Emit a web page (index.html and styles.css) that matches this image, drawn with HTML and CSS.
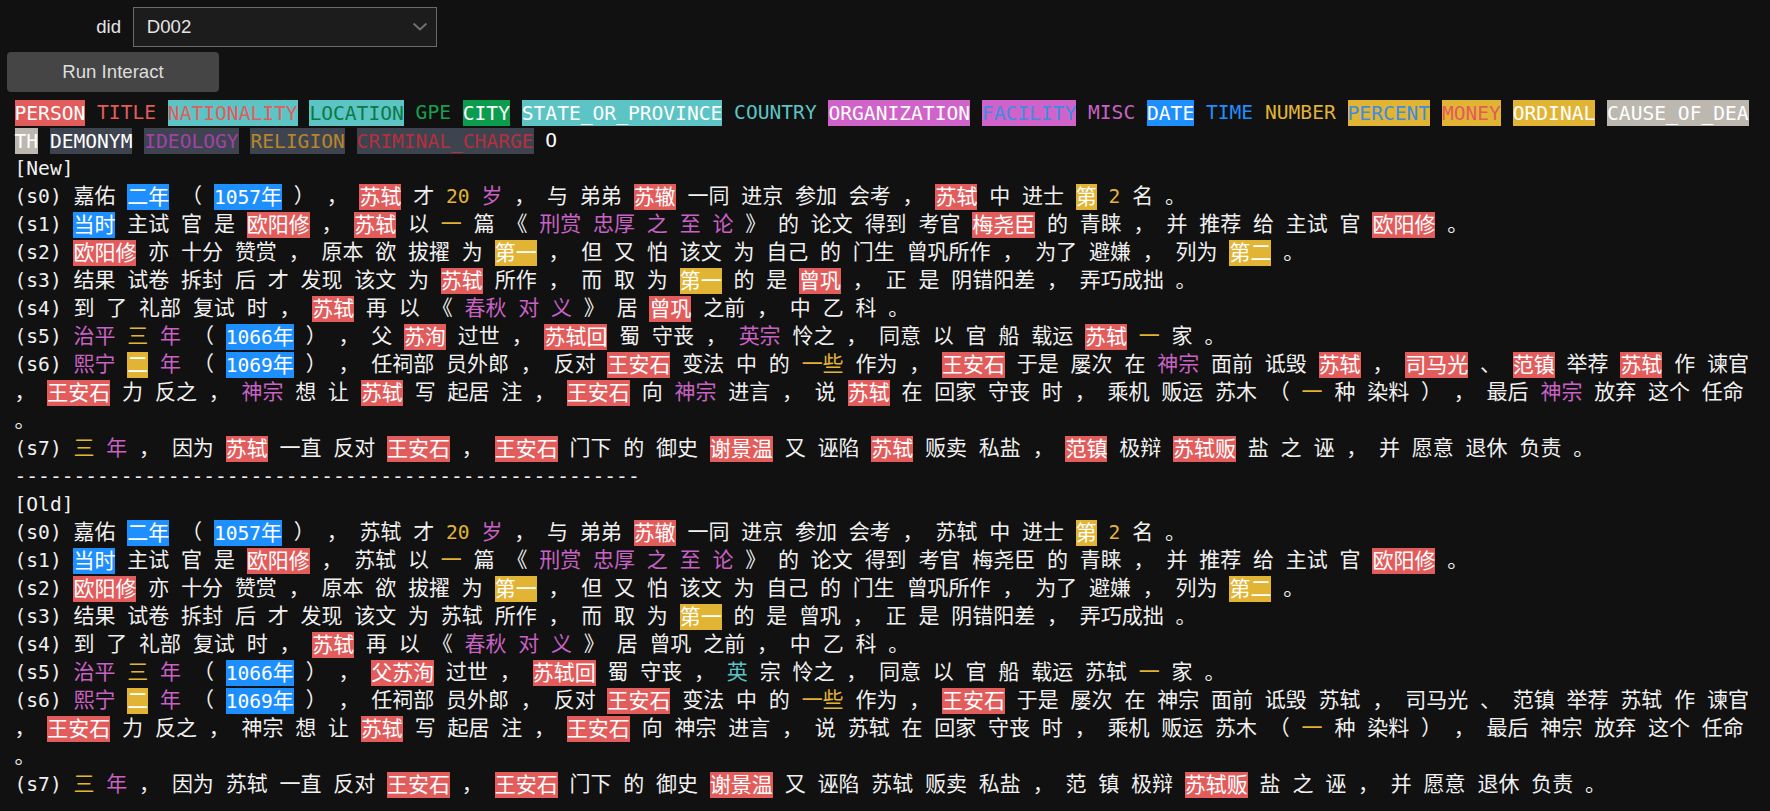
FILE: index.html
```html
<!DOCTYPE html>
<html lang="zh">
<head>
<meta charset="utf-8">
<title>Run Interact</title>
<link rel="stylesheet" href="styles.css">
</head>
<body>
<div class="widgets">
  <div class="row">
    <label class="lbl">did</label>
    <div class="select" role="combobox"><span>D002</span><svg class="chev" viewBox="0 0 16 9"><polyline points="1.5,1.5 8,7.5 14.5,1.5" fill="none" stroke="#707070" stroke-width="2"/></svg></div>
  </div>
  <button class="btn">Run Interact</button>
</div>
<pre class="out"><span class="PER">PERSON</span> <span class="TIT">TITLE</span> <span class="NAT">NATIONALITY</span> <span class="LOC">LOCATION</span> <span class="GPE">GPE</span> <span class="CIT">CITY</span> <span class="STA">STATE_OR_PROVINCE</span> <span class="COU">COUNTRY</span> <span class="ORG">ORGANIZATION</span> <span class="FAC">FACILITY</span> <span class="MIS">MISC</span> <span class="DAT">DATE</span> <span class="TIM">TIME</span> <span class="NUM">NUMBER</span> <span class="PCT">PERCENT</span> <span class="MON">MONEY</span> <span class="ORD">ORDINAL</span> <span class="CAU">CAUSE_OF_DEATH</span> <span class="DEM">DEMONYM</span> <span class="IDE">IDEOLOGY</span> <span class="REL">RELIGION</span> <span class="CRI">CRIMINAL_CHARGE</span> <span class="O">O</span>
[New]
(s0) 嘉佑 <span class="DAT">二年</span> （ <span class="DAT">1057年</span> ） ， <span class="PER">苏轼</span> 才 <span class="NUM">20</span> <span class="MIS">岁</span> ， 与 弟弟 <span class="PER">苏辙</span> 一同 进京 参加 会考 ， <span class="PER">苏轼</span> 中 进士 <span class="ORD">第</span> <span class="NUM">2</span> 名 。
(s1) <span class="DAT">当时</span> 主试 官 是 <span class="PER">欧阳修</span> ， <span class="PER">苏轼</span> 以 <span class="NUM">一</span> 篇 《 <span class="MIS">刑赏 忠厚 之 至 论</span> 》 的 论文 得到 考官 <span class="PER">梅尧臣</span> 的 青睐 ， 并 推荐 给 主试 官 <span class="PER">欧阳修</span> 。
(s2) <span class="PER">欧阳修</span> 亦 十分 赞赏 ， 原本 欲 拔擢 为 <span class="ORD">第一</span> ， 但 又 怕 该文 为 自己 的 门生 曾巩所作 ， 为了 避嫌 ， 列为 <span class="ORD">第二</span> 。
(s3) 结果 试卷 拆封 后 才 发现 该文 为 <span class="PER">苏轼</span> 所作 ， 而 取 为 <span class="ORD">第一</span> 的 是 <span class="PER">曾巩</span> ， 正 是 阴错阳差 ， 弄巧成拙 。
(s4) 到 了 礼部 复试 时 ， <span class="PER">苏轼</span> 再 以 《 <span class="MIS">春秋 对 义</span> 》 居 <span class="PER">曾巩</span> 之前 ， 中 乙 科 。
(s5) <span class="MIS">治平</span> <span class="NUM">三</span> <span class="MIS">年</span> （ <span class="DAT">1066年</span> ） ， 父 <span class="PER">苏洵</span> 过世 ， <span class="PER">苏轼回</span> 蜀 守丧 ， <span class="MIS">英宗</span> 怜之 ， 同意 以 官 船 载运 <span class="PER">苏轼</span> <span class="NUM">一</span> 家 。
(s6) <span class="MIS">熙宁</span> <span class="ORD">二</span> <span class="MIS">年</span> （ <span class="DAT">1069年</span> ） ， 任祠部 员外郎 ， 反对 <span class="PER">王安石</span> 变法 中 的 <span class="NUM">一些</span> 作为 ， <span class="PER">王安石</span> 于是 屡次 在 <span class="MIS">神宗</span> 面前 诋毁 <span class="PER">苏轼</span> ， <span class="PER">司马光</span> 、 <span class="PER">范镇</span> 举荐 <span class="PER">苏轼</span> 作 谏官 ， <span class="PER">王安石</span> 力 反之 ， <span class="MIS">神宗</span> 想 让 <span class="PER">苏轼</span> 写 起居 注 ， <span class="PER">王安石</span> 向 <span class="MIS">神宗</span> 进言 ， 说 <span class="PER">苏轼</span> 在 回家 守丧 时 ， 乘机 贩运 苏木 （ <span class="NUM">一</span> 种 染料 ） ， 最后 <span class="MIS">神宗</span> 放弃 这个 任命 。
(s7) <span class="NUM">三</span> <span class="MIS">年</span> ， 因为 <span class="PER">苏轼</span> 一直 反对 <span class="PER">王安石</span> ， <span class="PER">王安石</span> 门下 的 御史 <span class="PER">谢景温</span> 又 诬陷 <span class="PER">苏轼</span> 贩卖 私盐 ， <span class="PER">范镇</span> 极辩 <span class="PER">苏轼贩</span> 盐 之 诬 ， 并 愿意 退休 负责 。
-----------------------------------------------------
[Old]
(s0) 嘉佑 <span class="DAT">二年</span> （ <span class="DAT">1057年</span> ） ， 苏轼 才 <span class="NUM">20</span> <span class="MIS">岁</span> ， 与 弟弟 <span class="PER">苏辙</span> 一同 进京 参加 会考 ， 苏轼 中 进士 <span class="ORD">第</span> <span class="NUM">2</span> 名 。
(s1) <span class="DAT">当时</span> 主试 官 是 <span class="PER">欧阳修</span> ， 苏轼 以 <span class="NUM">一</span> 篇 《 <span class="MIS">刑赏 忠厚 之 至 论</span> 》 的 论文 得到 考官 梅尧臣 的 青睐 ， 并 推荐 给 主试 官 <span class="PER">欧阳修</span> 。
(s2) <span class="PER">欧阳修</span> 亦 十分 赞赏 ， 原本 欲 拔擢 为 <span class="ORD">第一</span> ， 但 又 怕 该文 为 自己 的 门生 曾巩所作 ， 为了 避嫌 ， 列为 <span class="ORD">第二</span> 。
(s3) 结果 试卷 拆封 后 才 发现 该文 为 苏轼 所作 ， 而 取 为 <span class="ORD">第一</span> 的 是 曾巩 ， 正 是 阴错阳差 ， 弄巧成拙 。
(s4) 到 了 礼部 复试 时 ， <span class="PER">苏轼</span> 再 以 《 <span class="MIS">春秋 对 义</span> 》 居 曾巩 之前 ， 中 乙 科 。
(s5) <span class="MIS">治平</span> <span class="NUM">三</span> <span class="MIS">年</span> （ <span class="DAT">1066年</span> ） ， <span class="PER">父苏洵</span> 过世 ， <span class="PER">苏轼回</span> 蜀 守丧 ， <span class="COU">英</span> 宗 怜之 ， 同意 以 官 船 载运 苏轼 <span class="NUM">一</span> 家 。
(s6) <span class="MIS">熙宁</span> <span class="ORD">二</span> <span class="MIS">年</span> （ <span class="DAT">1069年</span> ） ， 任祠部 员外郎 ， 反对 <span class="PER">王安石</span> 变法 中 的 <span class="NUM">一些</span> 作为 ， <span class="PER">王安石</span> 于是 屡次 在 神宗 面前 诋毁 苏轼 ， 司马光 、 范镇 举荐 苏轼 作 谏官 ， <span class="PER">王安石</span> 力 反之 ， 神宗 想 让 <span class="PER">苏轼</span> 写 起居 注 ， <span class="PER">王安石</span> 向 神宗 进言 ， 说 苏轼 在 回家 守丧 时 ， 乘机 贩运 苏木 （ <span class="NUM">一</span> 种 染料 ） ， 最后 神宗 放弃 这个 任命 。
(s7) <span class="NUM">三</span> <span class="MIS">年</span> ， 因为 苏轼 一直 反对 <span class="PER">王安石</span> ， <span class="PER">王安石</span> 门下 的 御史 <span class="PER">谢景温</span> 又 诬陷 苏轼 贩卖 私盐 ， 范 镇 极辩 <span class="PER">苏轼贩</span> 盐 之 诬 ， 并 愿意 退休 负责 。</pre>
<script src="script.js"></script>
</body>
</html>
```

FILE: styles.css
```css
html, body {
  margin: 0;
  background: #111111;
}
body {
  width: 1770px;
  height: 811px;
  overflow: hidden;
}
.widgets {
  padding: 7.3px 0 0 7px;
}
.row {
  display: flex;
  align-items: center;
  height: 39.4px;
}
.lbl {
  width: 114px;
  margin-right: 12.3px;
  text-align: right;
  font: 18.6px "Liberation Sans", Arial, sans-serif;
  color: #e4e4e4;
}
.select {
  box-sizing: border-box;
  width: 303.4px;
  height: 100%;
  display: flex;
  align-items: center;
  justify-content: space-between;
  padding: 0 8px 0 12.5px;
  border: 1px solid #6b6b6b;
  background: #1c1c1c;
  font: 18.6px "Liberation Sans", Arial, sans-serif;
  color: #e4e4e4;
}
.chev {
  width: 16px;
  height: 9px;
}
.btn {
  display: block;
  margin-top: 5px;
  width: 212px;
  height: 40px;
  padding: 0;
  border: 0;
  border-radius: 4px;
  background: #454545;
  color: #dedede;
  font: 18.6px "Liberation Sans", Arial, sans-serif;
}
.out {
  margin: 7.5px 0 0;
  padding: 0 15.5px 0 14.5px;
  font-family: "DejaVu Sans Mono", monospace;
  font-size: 19.6px;
  line-height: 28px;
  color: #f0f0f0;
  white-space: pre-wrap;
  line-break: anywhere;
}
.zh {
  font-family: "Noto Sans CJK SC", sans-serif;
  font-size: 21px;
  line-height: 1;
}
.PER, .NAT, .LOC, .CIT, .STA, .ORG, .FAC, .DAT, .PCT, .MON, .ORD, .CAU, .DEM, .IDE, .REL, .CRI {
  padding: 1.5px 0;
}
.PER { background: #e25c5c; color: #ffffff; }
.TIT { color: #e25c5c; }
.NAT { background: #5cc4c5; color: #e25c5c; }
.LOC { background: #5cc4c5; color: #0b7a45; }
.GPE { color: #17a050; }
.CIT { background: #0b9c4e; color: #ffffff; }
.STA { background: #5cc4c5; color: #ffffff; }
.COU { color: #5cc4c5; }
.ORG { background: #d063c9; color: #ffffff; }
.FAC { background: #d063c9; color: #3d8de0; }
.MIS { color: #c862c4; }
.DAT { background: #1e8fff; color: #ffffff; }
.TIM { color: #1e8fff; }
.NUM { color: #e2b434; }
.PCT { background: #e2b434; color: #3d8de0; }
.MON { background: #e2b434; color: #e25c5c; }
.ORD { background: #e2b434; color: #ffffff; }
.CAU { background: #bcb8b0; color: #ffffff; }
.DEM { background: #3d434f; color: #ffffff; }
.IDE { background: #3d434f; color: #a242a8; }
.REL { background: #3d434f; color: #b8862a; }
.CRI { background: #3d434f; color: #b5303d; }
.O { color: #ffffff; }
```

FILE: script.js
```js
(function () {
  var root = document.querySelector('.out');
  if (!root) return;
  var walker = document.createTreeWalker(root, NodeFilter.SHOW_TEXT);
  var nodes = [];
  while (walker.nextNode()) nodes.push(walker.currentNode);
  var re = /[\u2E80-\u9FFF\uF900-\uFAFF\uFF00-\uFFEF]+/g;
  nodes.forEach(function (n) {
    var t = n.nodeValue;
    re.lastIndex = 0;
    if (!re.test(t)) return;
    re.lastIndex = 0;
    var frag = document.createDocumentFragment();
    var last = 0, m;
    while ((m = re.exec(t))) {
      if (m.index > last) frag.appendChild(document.createTextNode(t.slice(last, m.index)));
      var s = document.createElement('span');
      s.className = 'zh';
      s.textContent = m[0];
      frag.appendChild(s);
      last = m.index + m[0].length;
    }
    if (last < t.length) frag.appendChild(document.createTextNode(t.slice(last)));
    n.parentNode.replaceChild(frag, n);
  });
})();
```
